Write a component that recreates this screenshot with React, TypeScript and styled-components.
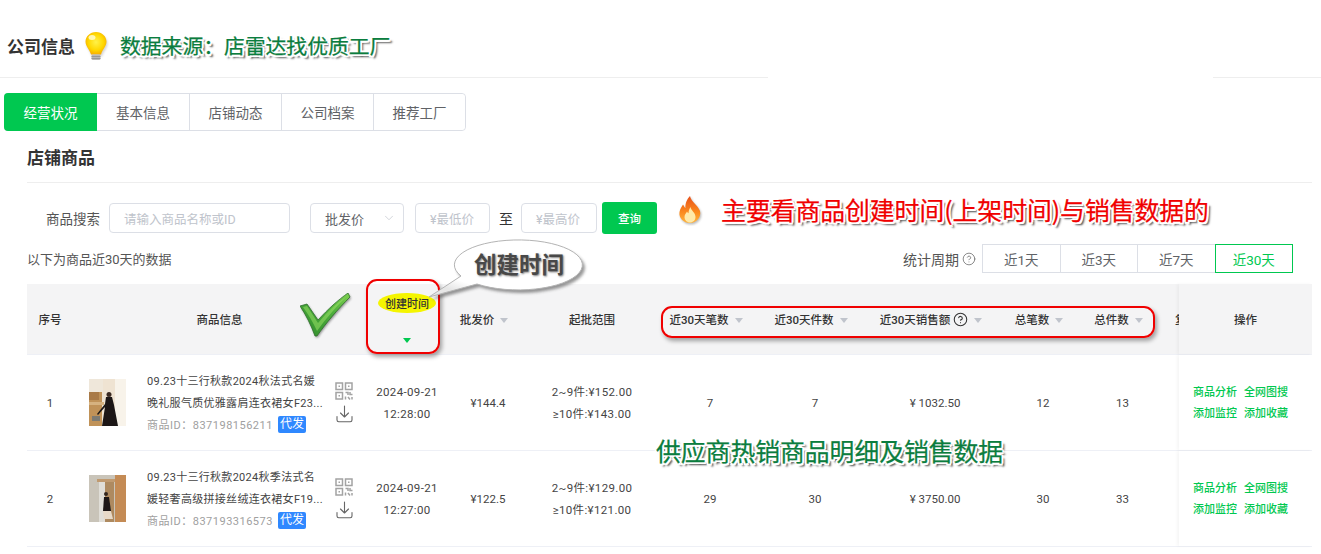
import React from "react";
import styled, { createGlobalStyle } from "styled-components";
import { CircleHelp, ChevronDown } from "lucide-react";

const GREEN = "#00c850";
const COLUMNS = "46px 287px 94px 74px 128px 108px 102px 138px 78px 81px 16px 133px";

const Global = createGlobalStyle`
  html, body { margin: 0; padding: 0; background: #fff; }
  body { font-family: Roboto, "Noto Sans CJK SC", sans-serif; color: #333; }
  * { box-sizing: border-box; }
`;

const Page = styled.div`
  position: relative;
  width: 1321px;
  height: 554px;
  overflow: hidden;
  background: #fff;
`;
const TopBar = styled.header`
  height: 78px;
  padding: 16px 0 0 7px;
  display: flex;
  align-items: center;
  border-bottom: 1px solid #eeeeee;
`;
const CompanyTitle = styled.h1`
  margin: 0;
  font-size: 17px;
  line-height: 24px;
  font-weight: 700;
  color: #333;
`;
const Tabs = styled.nav`
  display: flex;
  width: 462px;
  height: 38px;
  margin: 15px 0 0 4px;
  border: 1px solid #dcdfe6;
  border-radius: 4px;
`;
const Tab = styled.div<{ $active?: boolean }>`
  flex: none;
  width: ${(p) => (p.$active ? "93px" : "92px")};
  display: flex;
  align-items: center;
  justify-content: center;
  font-size: 13.5px;
  margin: ${(p) => (p.$active ? "-1px 0 -1px -1px" : "0")};
  background: ${(p) => (p.$active ? GREEN : "#fff")};
  color: ${(p) => (p.$active ? "#fff" : "#606266")};
  border-radius: ${(p) => (p.$active ? "4px 0 0 4px" : "0")};
  & + & { border-left: 1px solid #dcdfe6; }
  &:nth-child(2) { border-left: 0; }
  &:last-child { border-radius: 0 4px 4px 0; }
`;
const Section = styled.section`
  margin: 0 9px 0 27px;
`;
const SectionTitle = styled.h2`
  margin: 0;
  height: 52px;
  padding-top: 14px;
  font-size: 17px;
  line-height: 26px;
  font-weight: 700;
  color: #333;
  border-bottom: 1px solid #eeeeee;
`;
const SearchRow = styled.div`
  display: flex;
  align-items: center;
  height: 32px;
  margin-top: 19px;
  padding-left: 19px;
  font-size: 13.5px;
  color: #555;
`;
const SearchLabel = styled.span`
  width: 54px;
  margin-right: 9px;
  white-space: nowrap;
`;
const Field = styled.div<{ $w: number; $ml?: number }>`
  display: flex;
  align-items: center;
  justify-content: space-between;
  width: ${(p) => p.$w}px;
  height: 30px;
  margin-left: ${(p) => p.$ml ?? 0}px;
  padding: 0 10px 0 14px;
  border: 1px solid #dcdfe6;
  border-radius: 4px;
  font-size: 12.5px;
  color: #c0c4cc;
  white-space: nowrap;
`;
const SelectField = styled(Field)`
  color: #606266;
  font-size: 13px;
  padding-right: 7px;
`;
const RangeSep = styled.span`
  width: 14px;
  margin: 0 8px 0 9px;
  font-size: 14px;
  color: #333;
`;
const QueryButton = styled.button`
  width: 55px;
  height: 32px;
  margin-left: 5px;
  border: 0;
  border-radius: 3px;
  background: ${GREEN};
  color: #fff;
  font: 500 11.5px Roboto, "Noto Sans CJK SC", sans-serif;
`;
const StatsRow = styled.div`
  display: flex;
  align-items: center;
  justify-content: space-between;
  height: 29px;
  margin-top: 10px;
  padding-right: 19px;
  font-size: 13.5px;
  color: #555;
`;
const StatNote = styled.span`
  font-size: 13px;
  margin-bottom: 1px;
`;
const Period = styled.div`
  display: flex;
  align-items: center;
`;
const PeriodLabel = styled.span`
  display: flex;
  align-items: center;
  gap: 3px;
  margin-right: 7px;
  font-size: 14px;
`;
const PeriodButton = styled.div<{ $active?: boolean }>`
  width: 78.5px;
  height: 29px;
  margin-left: -1px;
  display: flex;
  align-items: center;
  justify-content: center;
  position: relative;
  z-index: ${(p) => (p.$active ? 1 : 0)};
  border: 1px solid ${(p) => (p.$active ? GREEN : "#dcdfe6")};
  color: ${(p) => (p.$active ? GREEN : "#606266")};
`;
const Table = styled.div`
  margin-top: 11px;
`;
const HeadRow = styled.div`
  display: grid;
  grid-template-columns: ${COLUMNS};
  height: 71px;
  background: #f4f4f5;
  border-bottom: 1px solid #eef0f6;
  font-size: 11.5px;
  font-weight: 500;
  color: #333;
`;
const HeadCell = styled.div<{ $sort?: boolean }>`
  display: flex;
  align-items: center;
  justify-content: center;
  gap: 6px;
  padding-right: ${(p) => (p.$sort ? "8px" : "0")};
  white-space: nowrap;
  min-width: 0;
`;
const ProductHead = styled(HeadCell)`
  padding-left: 6px;
`;
const PriceHead = styled(HeadCell)`
  padding-right: 14px;
`;
const CreatedHead = styled(HeadCell)`
  flex-direction: column;
  justify-content: flex-start;
  gap: 25px;
  padding-top: 9px;
`;
const CreatedLabel = styled.span`
  display: flex;
  align-items: center;
  justify-content: center;
  width: 58px;
  height: 20px;
  border-radius: 50%;
  background: #f5f500;
  font-size: 11px;
`;
const ClippedHead = styled.div`
  display: flex;
  align-items: center;
  overflow: hidden;
  padding-left: 12px;
  white-space: nowrap;
`;
const SortArrow = styled.i<{ $on?: boolean }>`
  display: block;
  flex: none;
  width: 0;
  height: 0;
  border-left: 4px solid transparent;
  border-right: 4px solid transparent;
  border-top: 5px solid ${(p) => (p.$on ? GREEN : "#c0c4cc")};
  margin-top: ${(p) => (p.$on ? "0" : "2px")};
`;
const HelpMark = styled(CircleHelp)`
  flex: none;
  margin-left: -3px;
`;
const FixedHead = styled(HeadCell)`
  background: #f4f4f5;
  box-shadow: -2px 0 3px rgba(0, 0, 0, 0.04);
`;
const Row = styled.div`
  display: grid;
  grid-template-columns: ${COLUMNS};
  height: 96px;
  border-bottom: 1px solid #eef0f6;
  font-size: 11.5px;
  color: #444;
`;
const Cell = styled.div`
  display: flex;
  align-items: center;
  justify-content: center;
  text-align: center;
  line-height: 22px;
  padding-top: 1px;
`;
const PriceCell = styled(Cell)`
  padding-right: 6px;
`;
const TwoLines = styled(Cell)`
  flex-direction: column;
  letter-spacing: 0.35px;
  padding-top: 0;
`;
const Product = styled.div`
  display: flex;
  align-items: center;
  padding-left: 16px;
`;
const Thumb = styled.svg`
  flex: none;
  width: 37px;
  height: 47px;
  margin-right: 21px;
`;
const ProductText = styled.div`
  width: 176px;
  flex: none;
  margin-right: 11px;
`;
const ProductName = styled.div`
  font-size: 11px;
  letter-spacing: 0.3px;
  line-height: 21.5px;
  color: #444;
`;
const ProductId = styled.div`
  display: flex;
  align-items: center;
  gap: 5px;
  height: 20px;
  font-size: 11px;
  letter-spacing: 0.5px;
  color: #a0a0a0;
  white-space: nowrap;
`;
const Tag = styled.span`
  width: 28px;
  height: 17px;
  border-radius: 2px;
  background: #2f88ff;
  color: #fff;
  font-size: 12px;
  letter-spacing: 0;
  line-height: 17px;
  text-align: center;
`;
const ProductTools = styled.div`
  display: flex;
  flex-direction: column;
  align-items: center;
  gap: 5px;
  width: 20px;
`;
const Ops = styled.div`
  display: grid;
  grid-template-columns: auto auto;
  justify-content: start;
  align-content: center;
  column-gap: 7px;
  padding-left: 14px;
  background: #fff;
  box-shadow: -2px 0 3px rgba(0, 0, 0, 0.04);
  color: ${GREEN};
  font-size: 11px;
  font-weight: 500;
  line-height: 21px;
`;

/* Annotations laid over the screenshot */
const Overlay = styled.div<{ $x: number; $y: number }>`
  position: absolute;
  left: ${(p) => p.$x}px;
  top: ${(p) => p.$y}px;
  pointer-events: none;
`;
const LinePatch = styled(Overlay)`
  width: 445px;
  height: 2px;
  background: #fff;
`;
const Callout = styled(Overlay)<{ $color: string; $size: number }>`
  font-size: ${(p) => p.$size}px;
  line-height: 1.2;
  color: ${(p) => p.$color};
  white-space: nowrap;
  font-family: "Noto Sans CJK SC", sans-serif;
  -webkit-text-stroke: 0.25px ${(p) => p.$color};
  text-shadow:
    2px 0 0 #fff, -2px 0 0 #fff, 0 2px 0 #fff, 0 -2px 0 #fff,
    1.5px 1.5px 0 #fff, -1.5px 1.5px 0 #fff, 1.5px -1.5px 0 #fff, -1.5px -1.5px 0 #fff,
    3px 3px 2px rgba(0, 0, 0, 0.75);
`;
const RedFrame = styled(Overlay)<{ $w: number; $h: number; $r: number }>`
  width: ${(p) => p.$w}px;
  height: ${(p) => p.$h}px;
  border: 2px solid #f00000;
  border-radius: ${(p) => p.$r}px;
  box-shadow: 2px 3px 4px rgba(0, 0, 0, 0.35);
`;
const BubbleLabel = styled(Overlay)`
  width: 128px;
  text-align: center;
  font-family: "Noto Sans CJK SC", sans-serif;
  font-size: 22.5px;
  line-height: 30px;
  font-weight: 700;
  color: #484848;
  text-shadow: 1px 1px 2px rgba(0, 0, 0, 0.5);
`;

const Bulb = () => (
  <svg width="26" height="34" viewBox="0 0 26 34">
    <defs>
      <radialGradient id="bulb" cx="0.5" cy="0.45" r="0.6">
        <stop offset="0" stopColor="#fff24a" />
        <stop offset="0.6" stopColor="#ffd800" />
        <stop offset="1" stopColor="#f5a400" />
      </radialGradient>
      <filter id="bs"><feGaussianBlur stdDeviation="0.9" /></filter>
    </defs>
    <path d="M13 3C7 3 2.5 7.5 2.5 12.5c0 5 3.8 7.5 5.5 13h10c1.7-5.5 5.5-8 5.5-13C23.5 7.5 19 3 13 3z" fill="#888" opacity=".35" filter="url(#bs)" transform="translate(1 1)" />
    <path d="M13 2C7 2 2.5 6.5 2.5 11.5c0 5 3.8 7.5 5.5 13h10c1.7-5.5 5.5-8 5.5-13C23.5 6.5 19 2 13 2z" fill="url(#bulb)" />
    <ellipse cx="9" cy="7.5" rx="3.5" ry="2.5" fill="#fffbd0" opacity=".85" />
    <rect x="8.5" y="24.5" width="9" height="5.5" rx="1.5" fill="#b9b9b9" />
    <path d="M8.5 26.5h9M8.5 28.5h9" stroke="#8a8a8a" strokeWidth=".7" />
  </svg>
);

const FLAME = "M15 2c1 6 8 9 10 15 1.5 6-3.5 12-10 12S3.5 24 4.5 18c.5-3.5 2.5-5.5 3.5-7.5 1 1.5 1.5 3 2.5 3.5C10 9.5 12 5 15 2z";

const Fire = () => (
  <svg width="30" height="32" viewBox="0 0 30 32">
    <defs>
      <linearGradient id="flame" x1="0" y1="0" x2="0" y2="1">
        <stop offset="0" stopColor="#e8501a" />
        <stop offset="0.6" stopColor="#fb8a1e" />
        <stop offset="1" stopColor="#ffb640" />
      </linearGradient>
      <filter id="fs"><feGaussianBlur stdDeviation="1.2" /></filter>
    </defs>
    <path d={FLAME} fill="#666" opacity=".45" filter="url(#fs)" transform="translate(1 1.5)" />
    <path d={FLAME} fill="url(#flame)" />
    <path d="M15.5 13c.5 3.5 5 5.5 5 10 0 3.2-2.5 5.5-5.5 5.5S9.5 26 9.5 23c0-2.5 1.7-3.5 2.5-5.500.5 1 1 1.500 1.500 1.800 0-2.300.8-4.300 2-6.300z" fill="#ffe9a8" />
  </svg>
);

const CHECK_SHAPE = "M0 13L7 11L18 27C28 16 38 7 48 0L50 4C38 16 26 30 17 43L15 43C11 32 6 22 0 13z";

const Check = () => (
  <svg width="54" height="48" viewBox="0 0 54 48">
    <defs>
      <linearGradient id="chk" x1="0" y1="1" x2="1" y2="0">
        <stop offset="0" stopColor="#2f8a2c" />
        <stop offset="0.6" stopColor="#4eae3c" />
        <stop offset="1" stopColor="#7ed050" />
      </linearGradient>
      <filter id="cs"><feGaussianBlur stdDeviation="1.2" /></filter>
    </defs>
    <path d={CHECK_SHAPE} fill="#333" opacity=".5" filter="url(#cs)" transform="translate(1 1.5)" />
    <path d={CHECK_SHAPE} fill="url(#chk)" stroke="#2f6f2c" strokeWidth=".8" />
    <path d="M3 14L7 13L18 30C28 18 38 9 47 3C37 13 26 25 17 38C13 29 8 21 3 14z" fill="#9fe56a" opacity=".5" />
  </svg>
);

const BUBBLE_SHAPE = "M36 38A64 25 0 1 1 52 46L4 59z";

const Bubble = () => (
  <svg width="168" height="68" viewBox="0 0 168 68">
    <defs>
      <filter id="bbs"><feGaussianBlur stdDeviation="1.8" /></filter>
      <radialGradient id="bbg" cx="0.55" cy="0.4" r="0.62">
        <stop offset="0.75" stopColor="#ffffff" />
        <stop offset="1" stopColor="#e6e6e6" />
      </radialGradient>
    </defs>
    <path d={BUBBLE_SHAPE} fill="#333" opacity=".5" filter="url(#bbs)" transform="translate(2.5 3)" />
    <path d={BUBBLE_SHAPE} fill="url(#bbg)" stroke="#b4b4b4" strokeWidth="1" />
  </svg>
);

const QrIcon = () => (
  <svg width="18" height="18" viewBox="0 0 18 18" fill="none" stroke="#a3a3a3" strokeWidth="1.5">
    <rect x="1" y="1" width="6.5" height="6.5" />
    <rect x="10.5" y="1" width="6.5" height="6.5" />
    <rect x="1" y="10.5" width="6.5" height="6.5" />
    <rect x="3.5" y="3.5" width="1.5" height="1.5" fill="#a3a3a3" strokeWidth="0" />
    <rect x="13" y="3.5" width="1.5" height="1.5" fill="#a3a3a3" strokeWidth="0" />
    <rect x="3.5" y="13" width="1.5" height="1.5" fill="#a3a3a3" strokeWidth="0" />
    <path d="M10.5 10.5h2.5v2.5M15 10v2.5h2.5M10.5 14.5v3M13 15l2 2.5M17 15v2.5" />
  </svg>
);

const DownloadIcon = () => (
  <svg width="17" height="18" viewBox="0 0 17 18" fill="none" stroke="#666" strokeWidth="1.1" strokeLinecap="round" strokeLinejoin="round">
    <path d="M8.5 1v11M4.5 8l4 4 4-4" />
    <path d="M1 11.5V15c0 1 .7 1.7 1.7 1.7h11.6c1 0 1.7-.7 1.7-1.7v-3.5" />
  </svg>
);

const ThumbOne = () => (
  <Thumb viewBox="0 0 37 47">
    <defs><filter id="t1"><feGaussianBlur stdDeviation="0.6" /></filter></defs>
    <g filter="url(#t1)">
      <rect width="37" height="47" fill="#efe3d2" />
      <rect width="13" height="47" fill="#c09258" />
      <rect width="14" height="13" fill="#efe7da" />
      <rect y="23" width="15" height="3" fill="#d6b280" />
      <rect y="13" width="10" height="8" fill="#a97a46" />
      <rect x="26" width="11" height="47" fill="#f8f3ea" />
      <circle cx="20" cy="15.5" r="2.5" fill="#3a2a22" />
      <path d="M17 18h6l2 8 4 21H13l3-19-7 8-1-1 8-10z" fill="#1a1716" />
      <rect x="3" y="37" width="8" height="5" fill="#7c7a72" />
    </g>
  </Thumb>
);

const ThumbTwo = () => (
  <Thumb viewBox="0 0 37 47">
    <defs><filter id="t2"><feGaussianBlur stdDeviation="0.6" /></filter></defs>
    <g filter="url(#t2)">
      <rect width="37" height="47" fill="#c9c4b9" />
      <rect x="26" width="11" height="47" fill="#c48b55" />
      <rect x="8" y="4" width="18" height="3" fill="#c09a70" />
      <rect x="10" y="7" width="15" height="40" fill="#ae8a60" />
      <rect x="10" y="7" width="6" height="40" fill="#e0ded8" />
      <circle cx="17" cy="19" r="2" fill="#33261f" />
      <path d="M15 22h5l2 14h-8z" fill="#1c1816" />
      <path d="M14 36h8l2 8H15z" fill="#e7d9c8" />
    </g>
  </Thumb>
);

const rows = [
  {
    no: 1,
    Image: ThumbOne,
    name: "09.23十三行秋款2024秋法式名媛晚礼服气质优雅露肩连衣裙女F23...",
    id: "837198156211",
    date: "2024-09-21",
    time: "12:28:00",
    price: "¥144.4",
    low: "2~9件:¥152.00",
    high: "≥10件:¥143.00",
    d30: "7",
    p30: "7",
    sales: "¥ 1032.50",
    orders: "12",
    pieces: "13",
  },
  {
    no: 2,
    Image: ThumbTwo,
    name: "09.23十三行秋款2024秋季法式名媛轻奢高级拼接丝绒连衣裙女F19...",
    id: "837193316573",
    date: "2024-09-21",
    time: "12:27:00",
    price: "¥122.5",
    low: "2~9件:¥129.00",
    high: "≥10件:¥121.00",
    d30: "29",
    p30: "30",
    sales: "¥ 3750.00",
    orders: "30",
    pieces: "33",
  },
];

export default function App() {
  return (
    <Page>
      <Global />
      <TopBar>
        <CompanyTitle>公司信息</CompanyTitle>
      </TopBar>
      <Tabs>
        <Tab $active>经营状况</Tab>
        <Tab>基本信息</Tab>
        <Tab>店铺动态</Tab>
        <Tab>公司档案</Tab>
        <Tab>推荐工厂</Tab>
      </Tabs>
      <Section>
        <SectionTitle>店铺商品</SectionTitle>
        <SearchRow>
          <SearchLabel>商品搜索</SearchLabel>
          <Field $w={181}>请输入商品名称或ID</Field>
          <SelectField $w={94} $ml={20}>
            批发价
            <ChevronDown size={14} color="#c0c4cc" strokeWidth={1.2} />
          </SelectField>
          <Field $w={75} $ml={11}>¥最低价</Field>
          <RangeSep>至</RangeSep>
          <Field $w={76}>¥最高价</Field>
          <QueryButton>查询</QueryButton>
        </SearchRow>
        <StatsRow>
          <StatNote>以下为商品近30天的数据</StatNote>
          <Period>
            <PeriodLabel>
              统计周期 <CircleHelp size={14} color="#666" strokeWidth={1.3} />
            </PeriodLabel>
            <PeriodButton>近1天</PeriodButton>
            <PeriodButton>近3天</PeriodButton>
            <PeriodButton>近7天</PeriodButton>
            <PeriodButton $active>近30天</PeriodButton>
          </Period>
        </StatsRow>
        <Table>
          <HeadRow>
            <HeadCell>序号</HeadCell>
            <ProductHead>商品信息</ProductHead>
            <CreatedHead>
              <CreatedLabel>创建时间</CreatedLabel>
              <SortArrow $on />
            </CreatedHead>
            <PriceHead>批发价<SortArrow /></PriceHead>
            <HeadCell>起批范围</HeadCell>
            <HeadCell $sort>近30天笔数<SortArrow /></HeadCell>
            <HeadCell $sort>近30天件数<SortArrow /></HeadCell>
            <HeadCell $sort>
              近30天销售额
              <HelpMark size={15} color="#333" strokeWidth={1.7} />
              <SortArrow />
            </HeadCell>
            <HeadCell $sort>总笔数<SortArrow /></HeadCell>
            <HeadCell $sort>总件数<SortArrow /></HeadCell>
            <ClippedHead>复</ClippedHead>
            <FixedHead>操作</FixedHead>
          </HeadRow>
          {rows.map((r) => (
            <Row key={r.no}>
              <Cell>{r.no}</Cell>
              <Product>
                <r.Image />
                <ProductText>
                  <ProductName>{r.name}</ProductName>
                  <ProductId>
                    商品ID：{r.id}
                    <Tag>代发</Tag>
                  </ProductId>
                </ProductText>
                <ProductTools>
                  <QrIcon />
                  <DownloadIcon />
                </ProductTools>
              </Product>
              <TwoLines>
                <span>{r.date}</span>
                <span>{r.time}</span>
              </TwoLines>
              <PriceCell>{r.price}</PriceCell>
              <TwoLines>
                <span>{r.low}</span>
                <span>{r.high}</span>
              </TwoLines>
              <Cell>{r.d30}</Cell>
              <Cell>{r.p30}</Cell>
              <Cell>{r.sales}</Cell>
              <Cell>{r.orders}</Cell>
              <Cell>{r.pieces}</Cell>
              <Cell />
              <Ops>
                <span>商品分析</span>
                <span>全网图搜</span>
                <span>添加监控</span>
                <span>添加收藏</span>
              </Ops>
            </Row>
          ))}
        </Table>
      </Section>

      <LinePatch $x={768} $y={76} />
      <Overlay $x={83} $y={30}><Bulb /></Overlay>
      <Callout $x={120} $y={33} $color="#0b7d3e" $size={20.8}>数据来源：店雷达找优质工厂</Callout>
      <Overlay $x={675} $y={194}><Fire /></Overlay>
      <Callout $x={721} $y={195} $color="#f00000" $size={24.8}>主要看商品创建时间(上架时间)与销售数据的</Callout>
      <Callout $x={656} $y={436} $color="#0b7d3e" $size={24.8}>供应商热销商品明细及销售数据</Callout>
      <Overlay $x={300} $y={293}><Check /></Overlay>
      <RedFrame $x={366} $y={279} $w={74} $h={75} $r={11} />
      <RedFrame $x={661} $y={306} $w={494} $h={32} $r={11} />
      <Overlay $x={425} $y={238}><Bubble /></Overlay>
      <BubbleLabel $x={455} $y={248}>创建时间</BubbleLabel>
    </Page>
  );
}
